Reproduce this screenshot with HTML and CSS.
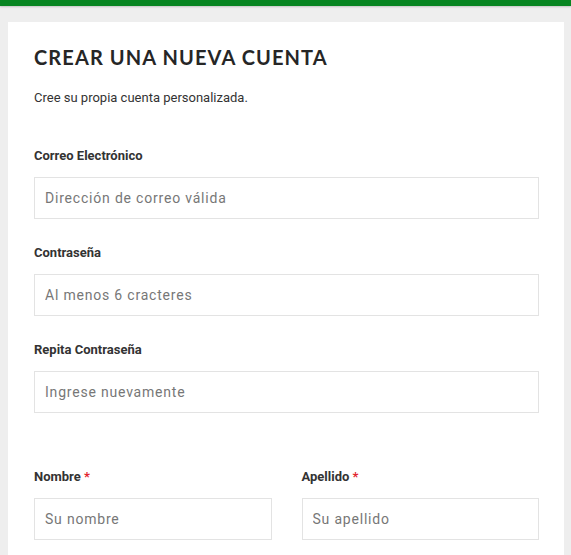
FILE: index.html
```html
<!DOCTYPE html>
<html lang="es">
<head>
<meta charset="utf-8">
<title>Crear una nueva cuenta</title>
<link rel="stylesheet" href="styles.css">
</head>
<body>
<div class="topbar"></div>
<main class="card">
  <h1 class="title">CREAR UNA NUEVA CUENTA</h1>
  <p class="subtitle">Cree su propia cuenta personalizada.</p>
  <form class="form">
    <div class="field">
      <label class="label" for="email">Correo Electrónico</label>
      <input class="input" id="email" type="text" placeholder="Dirección de correo válida">
    </div>
    <div class="field">
      <label class="label" for="pass">Contraseña</label>
      <input class="input" id="pass" type="text" placeholder="Al menos 6 cracteres">
    </div>
    <div class="field">
      <label class="label" for="pass2">Repita Contraseña</label>
      <input class="input" id="pass2" type="text" placeholder="Ingrese nuevamente">
    </div>
    <div class="row">
      <div class="field">
        <label class="label" for="nombre">Nombre <span class="req">*</span></label>
        <input class="input" id="nombre" type="text" placeholder="Su nombre">
      </div>
      <div class="field">
        <label class="label" for="apellido">Apellido <span class="req">*</span></label>
        <input class="input" id="apellido" type="text" placeholder="Su apellido">
      </div>
    </div>
  </form>
</main>
</body>
</html>
```

FILE: styles.css
```css
html, body {
  margin: 0;
  padding: 0;
}
body {
  background: #eeeeee;
  font-family: Roboto, "Liberation Sans", sans-serif;
  color: #333;
  overflow: hidden;
}
.topbar {
  height: 6px;
  background: #078521;
  box-shadow: 0 1px 2px rgba(0, 0, 0, 0.18);
}
.card {
  background: #fff;
  margin: 16px 7px 0 8px;
  padding: 23px 25px 40px 26px;
}
.title {
  margin: 0;
  font-family: Lato, "Liberation Sans", sans-serif;
  font-weight: 700;
  font-size: 20px;
  line-height: 24px;
  letter-spacing: 1.1px;
  color: #262626;
}
.subtitle {
  margin: 20px 0 0;
  font-size: 13px;
  line-height: 18px;
  color: #333;
}
.form {
  margin-top: 40px;
  display: flex;
  flex-direction: column;
}
.field {
  display: flex;
  flex-direction: column;
  gap: 12px;
}
.form > .field + .field {
  margin-top: 25px;
}
.row {
  margin-top: 55px;
  display: grid;
  grid-template-columns: 1fr 1fr;
  gap: 30px;
}
.label {
  font-size: 13px;
  line-height: 18px;
  font-weight: 700;
  color: #333;
}
.req {
  color: #e2262e;
}
.input {
  box-sizing: border-box;
  width: 100%;
  height: 42px;
  margin: 0;
  padding: 0 10px;
  border: 1px solid #e3e3e3;
  border-radius: 0;
  background: #fff;
  font-family: Roboto, "Liberation Sans", sans-serif;
  font-size: 14px;
  letter-spacing: 0.8px;
  color: #555;
  outline: none;
}
.input::placeholder {
  color: #777;
  opacity: 1;
}
```
